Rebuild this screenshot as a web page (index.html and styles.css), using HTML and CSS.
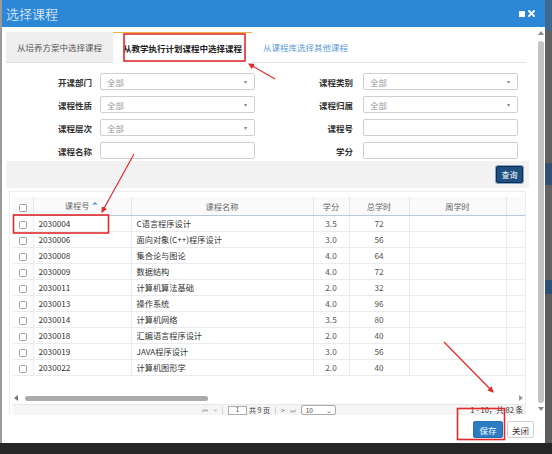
FILE: index.html
```html
<!DOCTYPE html>
<html lang="zh-CN">
<head>
<meta charset="utf-8">
<title>选择课程</title>
<link rel="stylesheet" href="styles.css">
</head>
<body>
<div class="screen">
  <div class="main">
    <div class="dialog">
      <div class="titlebar">
        <span class="title">选择课程</span>
        <span class="tb-icons">
          <span class="tb-max"></span>
          <svg class="tb-close" width="7" height="7" viewBox="0 0 7 7"><path d="M1 1L6 6M6 1L1 6" stroke="#fff" stroke-width="1.8" stroke-linecap="round"/></svg>
        </span>
      </div>
      <div class="body">
        <div class="content">
          <div class="tabs">
            <div class="tab">从培养方案中选择课程</div>
            <div class="tab active">从教学执行计划课程中选择课程</div>
            <div class="tab link">从课程库选择其他课程</div>
          </div>
          <div class="form">
            <label class="lbl">开课部门</label><div class="sel">全部<span class="caret">▾</span></div>
            <label class="lbl lbl2">课程类别</label><div class="sel">全部<span class="caret">▾</span></div>
            <label class="lbl">课程性质</label><div class="sel">全部<span class="caret">▾</span></div>
            <label class="lbl lbl2">课程归属</label><div class="sel">全部<span class="caret">▾</span></div>
            <label class="lbl">课程层次</label><div class="sel">全部<span class="caret">▾</span></div>
            <label class="lbl lbl2">课程号</label><div class="inp"></div>
            <label class="lbl">课程名称</label><div class="inp"></div>
            <label class="lbl lbl2">学分</label><div class="inp"></div>
          </div>
          <div class="band"><span class="qbtn">查询</span></div>
          <div class="panel">
            <table class="grid">
              <colgroup>
                <col class="c-chk"><col class="c-no"><col class="c-name"><col class="c-cr"><col class="c-hr"><col class="c-wk"><col class="c-ex">
              </colgroup>
              <thead>
                <tr><th><span class="cb"></span></th><th>课程号 <span class="sort">⌃</span></th><th>课程名称</th><th>学分</th><th>总学时</th><th>周学时</th><th></th></tr>
              </thead>
              <tbody>
                <tr><td><span class="cb"></span></td><td>2030004</td><td>C语言程序设计</td><td class="num">3.5</td><td class="num">72</td><td></td><td></td></tr>
                <tr><td><span class="cb"></span></td><td>2030006</td><td>面向对象(C++)程序设计</td><td class="num">3.0</td><td class="num">56</td><td></td><td></td></tr>
                <tr><td><span class="cb"></span></td><td>2030008</td><td>集合论与图论</td><td class="num">4.0</td><td class="num">64</td><td></td><td></td></tr>
                <tr><td><span class="cb"></span></td><td>2030009</td><td>数据结构</td><td class="num">4.0</td><td class="num">72</td><td></td><td></td></tr>
                <tr><td><span class="cb"></span></td><td>2030011</td><td>计算机算法基础</td><td class="num">2.0</td><td class="num">32</td><td></td><td></td></tr>
                <tr><td><span class="cb"></span></td><td>2030013</td><td>操作系统</td><td class="num">4.0</td><td class="num">96</td><td></td><td></td></tr>
                <tr><td><span class="cb"></span></td><td>2030014</td><td>计算机网络</td><td class="num">3.5</td><td class="num">80</td><td></td><td></td></tr>
                <tr><td><span class="cb"></span></td><td>2030018</td><td>汇编语言程序设计</td><td class="num">2.0</td><td class="num">40</td><td></td><td></td></tr>
                <tr><td><span class="cb"></span></td><td>2030019</td><td>JAVA程序设计</td><td class="num">3.0</td><td class="num">56</td><td></td><td></td></tr>
                <tr><td><span class="cb"></span></td><td>2030022</td><td>计算机图形学</td><td class="num">2.0</td><td class="num">40</td><td></td><td></td></tr>
              </tbody>
            </table>
            <div class="hscroll">
              <span class="arr-l"></span>
              <span class="hthumb"></span>
              <span class="arr-r"></span>
            </div>
            <div class="pager">
              <span></span>
              <div class="pg-mid">
                <span class="pg-ic">⏮</span>
                <span class="pg-ic">&lt;</span>
                <span class="pg-sep"></span>
                <span class="pg-inp">1</span>
                <span class="pg-txt">共 9 页</span>
                <span class="pg-sep"></span>
                <span class="pg-ic dark">&gt;</span>
                <span class="pg-ic">⏭</span>
                <span class="pg-sel">10<span class="pg-caret">⌄</span></span>
              </div>
              <span class="pg-info">1 - 10，共 82 条</span>
            </div>
          </div>
        </div>
        <div class="vscroll">
          <span class="arr-u"></span>
          <span class="vthumb"></span>
          <span class="arr-d"></span>
        </div>
      </div>
      <div class="footer">
        <span class="btn primary">保存</span>
        <span class="btn">关闭</span>
      </div>
    </div>
    <div class="side">
      <span class="s1"></span><span class="s2"></span><span class="s3"></span><span class="s4"></span><span class="s5"></span>
    </div>
  </div>
  <div class="bottom"></div>
  <svg class="marks" width="552" height="454" viewBox="0 0 552 454">
    <defs>
      <marker id="ah" markerWidth="6" markerHeight="6" refX="5" refY="3" orient="auto" markerUnits="userSpaceOnUse">
        <path d="M0 0L6 3L0 6Z" fill="#e02b2b"/>
      </marker>
    </defs>
    <rect x="124" y="34" width="121" height="27" fill="none" stroke="#e02b2b" stroke-width="1.6"/>
    <rect x="13.5" y="215" width="95" height="18" fill="none" stroke="#e02b2b" stroke-width="1.6"/>
    <rect x="457.5" y="408.5" width="47" height="31" fill="none" stroke="#e02b2b" stroke-width="1.6"/>
    <line x1="275" y1="79" x2="249" y2="64" stroke="#e02b2b" stroke-width="1.2" marker-end="url(#ah)"/>
    <line x1="134" y1="154" x2="102" y2="212" stroke="#e02b2b" stroke-width="1.2" marker-end="url(#ah)"/>
    <line x1="444" y1="342" x2="493" y2="392" stroke="#e02b2b" stroke-width="1.2" marker-end="url(#ah)"/>
  </svg>
</div>
</body>
</html>
```
FILE: styles.css
```css
* { box-sizing: border-box; }
html, body { margin: 0; padding: 0; }
body {
  width: 552px; height: 454px; overflow: hidden;
  background: #2a2a2a;
  font-family: "Noto Sans CJK SC", "Noto Sans", sans-serif;
  color: #333;
}
.screen { position: relative; width: 552px; height: 454px; }
.main { display: flex; height: 443px; }
.dialog {
  width: 545px; height: 443px; background: #fff;
  border-left: 2px solid #9a9a9a;
  display: flex; flex-direction: column;
}
.titlebar {
  height: 27px; flex: none; background: #2c87d7;
  display: flex; align-items: center; justify-content: space-between;
  padding: 0 10px 0 4px;
}
.title { color: #fff; font-size: 13px; line-height: 1; font-weight: 300; }
.tb-icons { display: flex; align-items: center; gap: 3px; }
.tb-max { width: 6px; height: 6px; background: #fff; display: block; }
.tb-close { display: block; }

.body { flex: none; height: 388px; display: flex; }
.content { flex: 1; padding: 5px 0 0 4px; overflow: hidden; }
.vscroll {
  width: 8px; flex: none; display: flex; flex-direction: column; align-items: center;
  padding: 4px 0 0 0;
}
.arr-u { width: 0; height: 0; border-left: 3px solid transparent; border-right: 3px solid transparent; border-bottom: 4px solid #888; }
.vthumb { width: 6px; height: 362px; margin: 6px 0 4px; background: #c3c3c3; border-radius: 3px; }
.arr-d { width: 0; height: 0; border-left: 3px solid transparent; border-right: 3px solid transparent; border-top: 4px solid #888; }

.tabs { display: flex; height: 31px; border-bottom: 1px solid #e2e2e2; width: 520px; }
.tab { font-size: 8.5px; display: flex; align-items: center; justify-content: center; color: #555; }
.tab:first-child { width: 107px; background: #eeeeee; }
.tab.active { width: 139px; background: #fff; color: #222; font-weight: bold; border-top: 1px solid #f1b046; margin-bottom: -1px; }
.tab.link { color: #5a9ad6; padding-left: 11px; }

.form {
  display: grid; margin-top: 10px;
  grid-template-columns: 94px 155px 108px 155px;
  grid-auto-rows: 17px; row-gap: 6px;
}
.lbl { font-size: 8.5px; font-weight: bold; color: #333; text-align: right; padding-right: 8px; display: flex; align-items: center; justify-content: flex-end; }
.lbl2 { padding-right: 10px; }
.sel, .inp { border: 1px solid #cfcfcf; border-radius: 2px; background: #fff; font-size: 8.5px; color: #999; display: flex; align-items: center; padding-left: 6px; position: relative; }
.caret { margin-left: auto; margin-right: 7px; font-size: 6px; color: #888; }

.band { margin-top: 2px; height: 27px; width: 523px; background: #f2f2f2; display: flex; align-items: center; justify-content: flex-end; padding-right: 6px; }
.qbtn { width: 27px; height: 17px; background: #1f4f80; border: 1px solid #0e2c4f; box-shadow: 0 0 0 1px #8aa5c2; border-radius: 2px; color: #fff; font-size: 8px; display: flex; align-items: center; justify-content: center; }

.panel { margin: 3px 0 0 3px; width: 517px; border: 1px solid #ececec; border-bottom: none; padding: 5px 0 0 3px; }
.grid { border-collapse: collapse; table-layout: fixed; width: 512px; font-size: 8.2px; }
.c-chk { width: 20px; } .c-no { width: 98px; } .c-name { width: 182px; } .c-cr { width: 36px; } .c-hr { width: 60px; } .c-wk { width: 97px; } .c-ex { width: 19px; }
.grid th { height: 18px; font-weight: normal; color: #666; background: #fafafa; border: 1px solid #e6e6e6; border-top: none; border-bottom: 1px solid #b9c9da; padding: 0; text-align: center; }
.grid td { height: 16px; border: 1px solid #ebebeb; padding: 0 0 0 5px; color: #333; white-space: nowrap; overflow: hidden; }
.grid th:first-child, .grid td:first-child { border-left: none; padding: 0; text-align: center; }
.grid th:last-child, .grid td:last-child { border-right: none; }
.grid td.num { text-align: center; padding: 0; color: #555; }
.cb { display: inline-block; width: 8px; height: 8px; border: 1px solid #9d9d9d; border-radius: 1.5px; vertical-align: middle; background: #fff; }
.sort { color: #3f86d0; font-size: 9px; font-weight: bold; }

.hscroll { margin-top: 19px; height: 7px; display: flex; align-items: center; padding: 0 2px 0 1px; }
.arr-l { width: 0; height: 0; border-top: 3px solid transparent; border-bottom: 3px solid transparent; border-right: 4px solid #777; }
.hthumb { width: 183px; height: 5px; margin-left: 7px; background: #ababab; border-radius: 3px; }
.arr-r { margin-left: auto; width: 0; height: 0; border-top: 3px solid transparent; border-bottom: 3px solid transparent; border-left: 4px solid #999; }

.pager { margin-top: 2px; height: 12px; background: #f5f5f5; border-top: 1px solid #e8e8e8; display: grid; grid-template-columns: 1fr auto 1fr; align-items: center; font-size: 7.5px; line-height: 1; color: #444; }
.pg-mid { display: flex; align-items: center; gap: 5px; height: 10px; }
.pg-ic { color: #aaa; font-size: 6.5px; line-height: 1; }
.pg-ic.dark { color: #555; }
.pg-sep { width: 1px; height: 7px; background: #d0d0d0; }
.pg-inp { width: 19px; height: 9px; border: 1px solid #aaa; background: #fff; font-size: 6px; display: flex; align-items: center; justify-content: center; }
.pg-txt { font-size: 7px; color: #333; margin-left: -3px; }
.pg-sel { width: 35px; height: 10px; border: 1px solid #aaa; border-radius: 2px; background: #fff; font-size: 6.5px; display: flex; align-items: center; padding-left: 4px; }
.pg-caret { margin-left: auto; margin-right: 3px; color: #666; font-size: 7px; }
.pg-info { justify-self: end; padding-right: 2px; font-size: 7.5px; color: #333; }

.footer { flex: 1; display: flex; justify-content: flex-end; align-items: flex-start; gap: 4px; padding: 6px 11px 0 0; }
.btn { height: 17px; width: 27px; border: 1px solid #d0d0d0; border-radius: 2px; font-size: 8.5px; color: #333; display: flex; align-items: center; justify-content: center; background: #fff; }
.btn.primary { width: 30px; background: #2c7cc4; border-color: #2670b3; color: #fff; }

.side { flex: 1; background: #5e5e5e; display: flex; flex-direction: column; }
.side span { display: block; }
.s1 { height: 31px; background: #3d6890; }
.s2 { height: 132px; background: #606060; }
.s3 { height: 22px; background: #2f4f74; }
.s4 { height: 95px; background: #626262; }
.s5 { height: 14px; background: #2b5079; }
.bottom { height: 11px; background: #262626; }
.marks { position: absolute; left: 0; top: 0; pointer-events: none; }
```
